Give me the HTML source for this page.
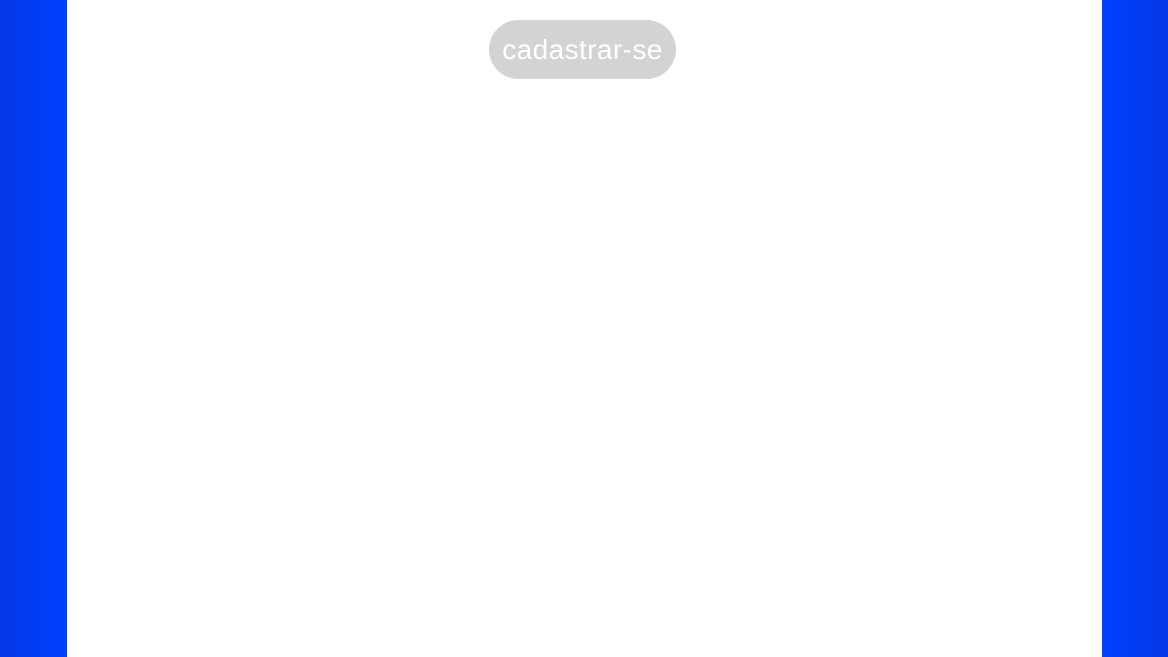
<!DOCTYPE html>
<html><head><style>
html,body{margin:0;padding:0;width:1168px;height:657px;overflow:hidden;background:#fff;}
.l{position:absolute;left:0;top:0;width:67px;height:657px;background:linear-gradient(to right,#0338e6,#0040ff);}
.r{position:absolute;left:1102px;top:0;width:66px;height:657px;background:linear-gradient(to right,#0040ff,#0338e6);}
.b{position:absolute;left:489px;top:20px;width:187px;height:59px;border-radius:30px;background:#d3d3d3;color:#fff;font-family:"Liberation Sans",sans-serif;font-size:28px;letter-spacing:0.4px;line-height:60px;text-align:center;}
</style></head><body>
<div class="l"></div><div class="r"></div>
<div class="b">cadastrar-se</div>
</body></html>
